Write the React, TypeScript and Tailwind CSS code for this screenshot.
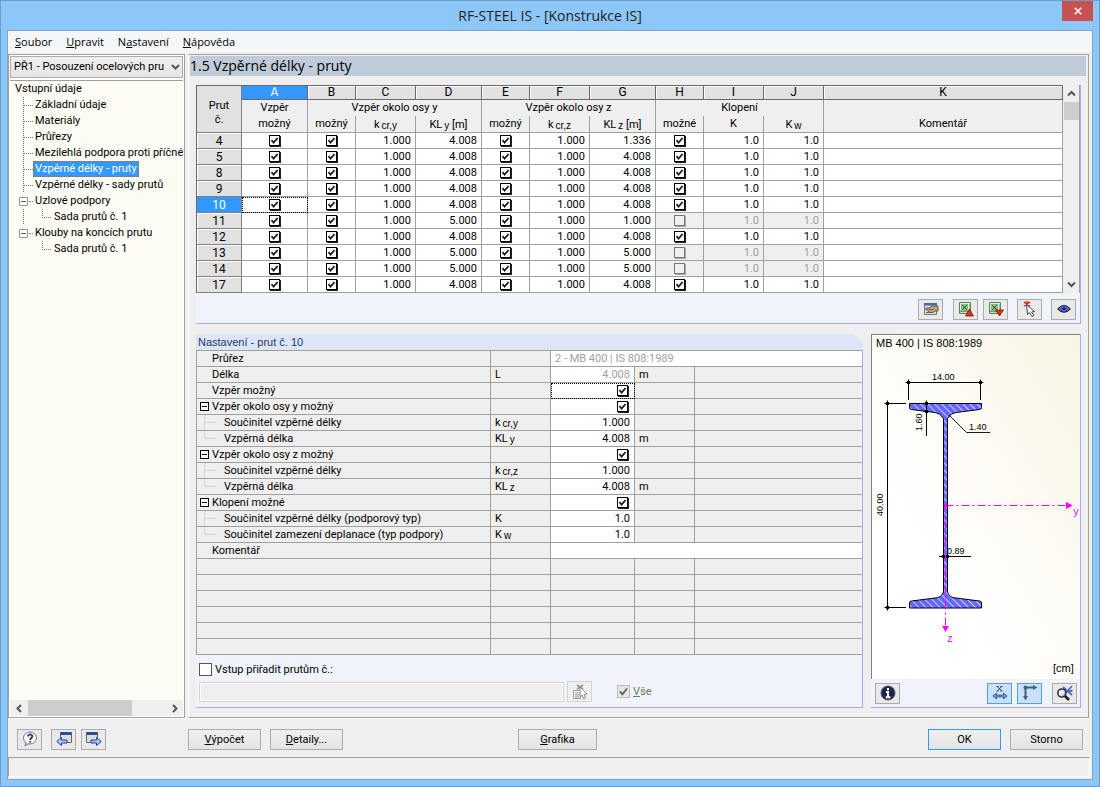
import { useState, type ReactNode } from "react";

const columns = [
  { letter: "A", width: 66 },
  { letter: "B", width: 48 },
  { letter: "C", width: 60 },
  { letter: "D", width: 66 },
  { letter: "E", width: 48 },
  { letter: "F", width: 60 },
  { letter: "G", width: 66 },
  { letter: "H", width: 48 },
  { letter: "I", width: 60 },
  { letter: "J", width: 60 },
  { letter: "K", width: 0 },
];

const members = [
  { no: 4, kly: "4.008", klz: "1.336", ltb: true },
  { no: 5, kly: "4.008", klz: "4.008", ltb: true },
  { no: 8, kly: "4.008", klz: "4.008", ltb: true },
  { no: 9, kly: "4.008", klz: "4.008", ltb: true },
  { no: 10, kly: "4.008", klz: "4.008", ltb: true },
  { no: 11, kly: "5.000", klz: "1.000", ltb: false },
  { no: 12, kly: "4.008", klz: "4.008", ltb: true },
  { no: 13, kly: "5.000", klz: "5.000", ltb: false },
  { no: 14, kly: "5.000", klz: "5.000", ltb: false },
  { no: 17, kly: "4.008", klz: "4.008", ltb: true },
];

type Setting = {
  label: string;
  kind?: "group" | "mid" | "last";
  symbol?: ReactNode;
  value?: string;
  check?: boolean;
  unit?: string;
  muted?: boolean;
  wide?: boolean;
};

const settings: Setting[] = [
  { label: "Průřez", value: "2 - MB 400 | IS 808:1989", muted: true, wide: true },
  { label: "Délka", symbol: "L", value: "4.008", unit: "m", muted: true },
  { label: "Vzpěr možný", check: true },
  { label: "Vzpěr okolo osy y možný", kind: "group", check: true },
  { label: "Součinitel vzpěrné délky", kind: "mid", symbol: <Sym base="k" sub="cr,y" />, value: "1.000" },
  { label: "Vzpěrná délka", kind: "last", symbol: <Sym base="KL" sub="y" />, value: "4.008", unit: "m" },
  { label: "Vzpěr okolo osy z možný", kind: "group", check: true },
  { label: "Součinitel vzpěrné délky", kind: "mid", symbol: <Sym base="k" sub="cr,z" />, value: "1.000" },
  { label: "Vzpěrná délka", kind: "last", symbol: <Sym base="KL" sub="z" />, value: "4.008", unit: "m" },
  { label: "Klopení možné", kind: "group", check: true },
  { label: "Součinitel vzpěrné délky (podporový typ)", kind: "mid", symbol: "K", value: "1.0" },
  { label: "Součinitel zamezení deplanace (typ podpory)", kind: "last", symbol: <Sym base="K" sub="w" />, value: "1.0" },
  { label: "Komentář", value: "", wide: true },
];

function Sym({ base, sub }: { base: string; sub: string }) {
  return (
    <span className="inline-flex items-end whitespace-nowrap">
      {base}
      <span className="pl-[2px] pt-[3px] font-['Liberation_Sans',sans-serif] text-[10px] leading-[12px]">{sub}</span>
    </span>
  );
}

function Tick({ label, checked = true, disabled = false }: { label: string; checked?: boolean; disabled?: boolean }) {
  return (
    <span className="relative inline-flex size-[11px] align-top">
      <input
        type="checkbox"
        aria-label={label}
        defaultChecked={checked}
        disabled={disabled}
        className="peer size-[11px] appearance-none border border-black bg-white shadow-[1px_1px_0_#222] disabled:border-[#777] disabled:bg-[#efefef] disabled:shadow-[1px_1px_0_#aaa]"
      />
      <svg viewBox="0 0 11 11" className="pointer-events-none absolute inset-0 hidden size-[11px] peer-checked:block">
        <path d="M2.5 5.2 4.6 7.6 8.6 3" fill="none" stroke="#222" strokeWidth="1.9" />
      </svg>
    </span>
  );
}

function TextButton({ children, primary, wide }: { children: ReactNode; primary?: boolean; wide?: boolean }) {
  return (
    <button
      type="button"
      className={`h-[21px] border bg-linear-to-b from-[#efefef] to-[#e4e4e4] text-[11px] leading-[19px] ${
        primary ? "border-[#3399ff]" : "border-[#acacac]"
      } ${wide ? "w-[79px]" : "w-[73px]"}`}
    >
      {children}
    </button>
  );
}

function IconButton({
  label,
  children,
  active,
  disabled,
}: {
  label: string;
  children: ReactNode;
  active?: boolean;
  disabled?: boolean;
}) {
  return (
    <button
      type="button"
      aria-label={label}
      title={label}
      disabled={disabled}
      className={`flex h-[21px] w-[25px] shrink-0 items-center justify-center border ${
        active ? "border-[#569de5] bg-[#c9e2fc]" : disabled ? "border-[#d4d4d4] bg-[#efefef]" : "border-[#acacac] bg-[#e9e9e9]"
      }`}
    >
      <svg viewBox="0 0 16 16" className="size-4">
        {children}
      </svg>
    </button>
  );
}

function Chevron({ d }: { d: string }) {
  return (
    <svg viewBox="0 0 9 9" className="size-[9px]">
      <path d={d} fill="none" stroke="#555" strokeWidth="2" />
    </svg>
  );
}

function ExcelIcon({ arrow }: { arrow: string }) {
  return (
    <>
      <path d="M1.5 1.5h11v11h-11z" fill="#e6eee4" stroke="#4f8a4c" />
      <path d="M2 10.500h10" stroke="#8a8f8a" strokeWidth="1.500" />
      <path d="M3 3h7v7H3z" fill="#6fae69" />
      <path d="m4 4 5 5M9 4 4 9" stroke="#fff" strokeWidth="2.400" />
      <path d="m4 4 5 5M9 4 4 9" stroke="#1f6b27" strokeWidth="1.200" />
      <path d="M11 4h1M11 6h1M11 8h1" stroke="#4f8a4c" />
      <path d={arrow} fill="#e0301e" stroke="#7d160d" strokeWidth=".8" />
    </>
  );
}

function WindowArrowIcon({ arrow, x }: { arrow: string; x: number }) {
  return (
    <>
      <path d={`M${x} 1.500h11v10h-11z`} fill="#dcdcdc" stroke="#666" />
      <path d={`M${x} 1h11v3h-11z`} fill="#2f4c94" />
      <path d={arrow} fill="#a9c8f8" stroke="#1f3fa0" />
    </>
  );
}

export default function App() {
  return (
    <div className="flex min-h-screen flex-col border border-[#6d9cc7] bg-[#8dc6f9] font-['Roboto','Liberation_Sans',sans-serif] text-[11px] leading-[15px] text-black">
      <header className="relative flex h-[29px] items-center justify-center">
        <h1 className="font-['Open_Sans','Noto_Sans',sans-serif] text-[14px] leading-5 text-[#222]">
          RF-STEEL IS - [Konstrukce IS]
        </h1>
        <button
          type="button"
          aria-label="Zavřít"
          className="absolute right-[6px] top-0 flex h-5 w-[31px] items-center justify-center bg-[#c75050]"
        >
          <svg viewBox="0 0 8 8" className="size-2">
            <path d="m.8.8 6.4 6.4M7.2.8.8 7.2" stroke="#fff" strokeWidth="1.6" />
          </svg>
        </button>
      </header>

      <div className="mx-[6px] mb-[6px] flex flex-1 flex-col border border-[#7da6ca] bg-[#efefef]">
        <nav className="flex h-[21px] items-center gap-[14px] bg-[#f5f6f7] pl-[7px] font-['Open_Sans','Noto_Sans',sans-serif] text-[11px]">
          <MenuItem before="" hot="S" after="oubor" />
          <MenuItem before="" hot="U" after="pravit" />
          <MenuItem before="N" hot="a" after="stavení" />
          <MenuItem before="" hot="N" after="ápověda" />
        </nav>

        <div className="flex flex-1 gap-[3px] border-b border-white pr-[3px] pt-[2px]">
          <Sidebar />
          <main className="flex min-w-0 flex-1 flex-col border border-[#a0a0a0] border-l-white bg-[#efefef] pb-[9px] pl-[1px] pt-[1px]">
            <h2 className="mr-[2px] h-5 bg-[#bfcbd9] font-['Open_Sans','Noto_Sans',sans-serif] text-[14px] leading-5">
              1.5 Vzpěrné délky - pruty
            </h2>
            <div className="ml-[6px] mr-[7px] mt-[9px] flex flex-1 flex-col gap-[10px]">
              <MembersPanel />
              <div className="flex flex-1 gap-2">
                <SettingsPanel />
                <SectionPanel />
              </div>
            </div>
          </main>
        </div>

        <footer className="flex h-[38px] items-center pl-[9px] pr-[9px] pt-[2px]">
          <div className="flex w-[171px] gap-[5px]">
            <IconButton label="Nápověda">
              <ellipse cx="8" cy="7" rx="6.5" ry="6" fill="#fff" stroke="#777" />
              <path d="m4 11-1 4 4-2.5" fill="#ddd" stroke="#777" />
              <path d="M6 5.500C6 2.600 10.500 3 10.300 5.500 10.100 7 8.200 7 8.200 9M8.200 10v1.600" fill="none" stroke="#23408f" strokeWidth="1.9" />
            </IconButton>
            <div className="ml-1 flex gap-[5px]">
              <IconButton label="Předchozí">
                <WindowArrowIcon x={4.5} arrow="M.8 10.500 5.500 6.500v2.500h5.500v3H5.500v2.500z" />
              </IconButton>
              <IconButton label="Další">
                <WindowArrowIcon x={0.5} arrow="M15.200 10.500 10.500 6.500V9H5v3h5.500v2.500z" />
              </IconButton>
            </div>
          </div>
          <div className="flex flex-1 gap-[9px]">
            <TextButton>
              <u>V</u>ýpočet
            </TextButton>
            <TextButton>
              <u>D</u>etaily...
            </TextButton>
            <div className="ml-[166px]">
              <TextButton wide>
                <u>G</u>rafika
              </TextButton>
            </div>
            <div className="ml-auto flex gap-[9px]">
              <TextButton primary>OK</TextButton>
              <TextButton>Storno</TextButton>
            </div>
          </div>
        </footer>
        <div role="status" className="mb-[2px] mr-[2px] h-[20px] border border-[#a0a0a0] border-b-white border-r-white" />
      </div>
    </div>
  );
}

function MenuItem({ before, hot, after }: { before: string; hot: string; after: string }) {
  return (
    <button type="button">
      {before}
      <u>{hot}</u>
      {after}
    </button>
  );
}

function Sidebar() {
  return (
    <aside className="flex w-[177px] shrink-0 flex-col border border-[#a0a0a0] bg-white p-px">
      <div className="relative">
        <select
          aria-label="Případ"
          className="h-[22px] w-full appearance-none border border-[#acacac] bg-linear-to-b from-[#efefef] to-[#e5e5e5] pl-[3px] pr-[18px] text-[11px] leading-5"
        >
          <option>PŘ1 - Posouzení ocelových pru</option>
        </select>
        <span className="pointer-events-none absolute right-[3px] top-[7px]">
          <Chevron d="M1 2 4.500 5.500 8 2" />
        </span>
      </div>
      <ul className="mt-[2px] flex-1 overflow-hidden border-t border-[#a0a0a0] bg-[#fcfcf4] leading-4">
        <li className="pl-[5px]">Vstupní údaje</li>
        <TreeItem label="Základní údaje" />
        <TreeItem label="Materiály" />
        <TreeItem label="Průřezy" />
        <TreeItem label="Mezilehlá podpora proti příčném" />
        <TreeItem label="Vzpěrné délky - pruty" selected />
        <TreeItem label="Vzpěrné délky - sady prutů" />
        <TreeItem label="Uzlové podpory" expandable />
        <TreeItem label="Sada prutů č. 1" nested trunk />
        <TreeItem label="Klouby na koncích prutu" expandable />
        <TreeItem label="Sada prutů č. 1" nested />
      </ul>
      <div className="flex h-4 items-center bg-[#efefef]">
        <span className="flex w-[18px] justify-center">
          <Chevron d="M6 1 2.500 4.500 6 8" />
        </span>
        <span className="h-full w-[104px] bg-[#cdcdcd]" />
        <span className="ml-auto flex w-[17px] justify-center">
          <Chevron d="M3 1 6.500 4.500 3 8" />
        </span>
      </div>
    </aside>
  );
}

function TreeItem({
  label,
  selected,
  expandable,
  nested,
  trunk,
}: {
  label: string;
  selected?: boolean;
  expandable?: boolean;
  nested?: boolean;
  trunk?: boolean;
}) {
  return (
    <li className="flex h-4 items-center whitespace-nowrap pl-[9px]">
      <span className={`flex h-4 shrink-0 items-center ${nested ? "w-[33px]" : "w-[14px]"}`}>
        {expandable ? (
          <>
            <button
              type="button"
              aria-label={`Sbalit ${label}`}
              className="flex size-[9px] shrink-0 items-center justify-center rounded-[1px] border border-[#919191] bg-white"
            >
              <span className="h-px w-[5px] bg-[#3b5fa8]" />
            </button>
            <span className="ml-px h-px w-1 border-t border-dotted border-[#888]" />
          </>
        ) : (
          <svg viewBox="0 0 35 16" className="h-4 w-[35px] shrink-0">
            {(!nested || trunk) && <path d="M4.500 0v16" stroke="#777" strokeDasharray="1 1" />}
            <path d={nested ? "M23.500 0v8.500h9" : "M5 8.500h9"} fill="none" stroke="#777" strokeDasharray="1 1" />
          </svg>
        )}
      </span>
      <span
        className={
          selected
            ? "relative h-4 border border-dotted border-[#c06a10] bg-[#3399ff] px-px leading-[14px] text-white"
            : "relative px-[2px]"
        }
      >
        {label}
      </span>
    </li>
  );
}

const headCell = "border-r border-[#a0a0a0] p-0 text-center font-normal leading-[14px]";
const cell = "h-4 border-b border-r border-[#a0a0a0] p-0";

function MembersPanel() {
  const [current, setCurrent] = useState(10);
  return (
    <section className="border-b border-r border-[#a9a9ee] bg-[#f0f3fa]">
      <div className="flex bg-[#efefef]">
        <table className="min-w-0 flex-1 table-fixed border-separate border-spacing-0 border-l border-t border-[#696969]">
          <colgroup>
            <col className="w-[45px]" />
            {columns.map((c) => (
              <col key={c.letter} style={c.width ? { width: c.width } : undefined} />
            ))}
          </colgroup>
          <thead>
            <tr className="h-[14px]">
              <th rowSpan={3} className="border-b border-r border-[#808080] bg-[#e1e1e1] p-0 pt-[8px] font-normal leading-[14px]">
                Prut
                <br />
                č.
              </th>
              {columns.map((c) => (
                <th
                  key={c.letter}
                  className={`h-[14px] border-b border-r border-[#696969] p-0 text-center text-[12px] font-normal leading-[13px] ${
                    c.letter === "A" ? "bg-[#3399ff] text-white" : "bg-[#e1e1e1] shadow-[inset_1px_1px_0_#fff]"
                  }`}
                >
                  {c.letter}
                </th>
              ))}
            </tr>
            <tr className="h-4">
              <th className={headCell}>Vzpěr</th>
              <th colSpan={3} className={headCell}>Vzpěr okolo osy y</th>
              <th colSpan={3} className={headCell}>Vzpěr okolo osy z</th>
              <th colSpan={3} className={headCell}>Klopení</th>
              <th className={headCell} />
            </tr>
            <tr className="h-[17px]">
              <th className={`${headCell} border-b`}>možný</th>
              <th className={`${headCell} border-b`}>možný</th>
              <th className={`${headCell} border-b`}><Sym base="k" sub="cr,y" /></th>
              <th className={`${headCell} border-b`}><Sym base="KL" sub="y" /> [m]</th>
              <th className={`${headCell} border-b`}>možný</th>
              <th className={`${headCell} border-b`}><Sym base="k" sub="cr,z" /></th>
              <th className={`${headCell} border-b`}><Sym base="KL" sub="z" /> [m]</th>
              <th className={`${headCell} border-b`}>možné</th>
              <th className={`${headCell} border-b`}>K</th>
              <th className={`${headCell} border-b`}><Sym base="K" sub="w" /></th>
              <th className={`${headCell} border-b`}>Komentář</th>
            </tr>
          </thead>
          <tbody className="bg-white text-right">
            {members.map((m) => {
              const off = m.ltb ? "" : "bg-[#efefef] text-[#a0a0a0]";
              return (
                <tr key={m.no} onClick={() => setCurrent(m.no)}>
                  <th
                    className={`h-4 border-b border-r border-[#808080] p-0 text-center text-[12px] font-normal leading-[14px] ${
                      m.no === current ? "bg-[#3399ff] text-white" : "bg-[#e1e1e1] shadow-[inset_1px_1px_0_#fff]"
                    }`}
                  >
                    {m.no}
                  </th>
                  <td className={`${cell} text-center leading-[11px] ${m.no === current ? "outline-1 -outline-offset-1 outline-dotted outline-black" : ""}`}>
                    <Tick label={`Vzpěr možný, prut ${m.no}`} />
                  </td>
                  <td className={`${cell} text-center leading-[11px]`}><Tick label={`Vzpěr okolo osy y, prut ${m.no}`} /></td>
                  <td className={`${cell} pr-1`}>1.000</td>
                  <td className={`${cell} pr-1`}>{m.kly}</td>
                  <td className={`${cell} text-center leading-[11px]`}><Tick label={`Vzpěr okolo osy z, prut ${m.no}`} /></td>
                  <td className={`${cell} pr-1`}>1.000</td>
                  <td className={`${cell} pr-1`}>{m.klz}</td>
                  <td className={`${cell} text-center leading-[11px] ${off}`}>
                    <Tick label={`Klopení, prut ${m.no}`} checked={m.ltb} disabled={!m.ltb} />
                  </td>
                  <td className={`${cell} pr-1 ${off}`}>1.0</td>
                  <td className={`${cell} pr-1 ${off}`}>1.0</td>
                  <td className={cell} />
                </tr>
              );
            })}
          </tbody>
        </table>
        <div className="ml-px flex w-4 shrink-0 flex-col items-center border-r border-[#a0a0a0]">
          <span className="flex h-[17px] items-center">
            <Chevron d="M1 6.500 4.500 3 8 6.500" />
          </span>
          <span className="h-[18px] w-full bg-[#cdcdcd]" />
          <span className="mt-auto flex h-[17px] items-center">
            <Chevron d="M1 2.500 4.500 6 8 2.500" />
          </span>
        </div>
      </div>
      <div className="flex h-[30px] items-center justify-end gap-[9px] pr-[4px] pt-[2px]">
        <IconButton label="Upravit">
          <path d="M1.500 2.500h12v11h-12z" fill="#d8dce2" stroke="#777" />
          <path d="M1 2h13v2.500H1z" fill="#3f6cae" />
          <path d="M3 7h3l3-2h6v5h-3l-2 1.500H6L5 9H3z" fill="#c2a47a" stroke="#554430" strokeWidth=".8" />
          <path d="M3 11.500h3M6 8.500h5" stroke="#666" />
        </IconButton>
        <div className="ml-px flex gap-[5px]">
          <IconButton label="Export do Excelu">
            <ExcelIcon arrow="M11.500 8 15.500 15H7.500z" />
          </IconButton>
          <IconButton label="Import z Excelu">
            <ExcelIcon arrow="M7.500 9h8l-4 6z" />
          </IconButton>
        </div>
        <IconButton label="Vybrat prut">
          <path d="m2 1 6 4M8 1 2 5M5 0v5" stroke="#d33a2c" strokeWidth="1.600" />
          <path d="m4.500 3.500 8 7-3 .5 2.500 3.500-2 1-2.500-4-2 2z" fill="#fff" stroke="#444" />
        </IconButton>
        <IconButton label="Zobrazit">
          <path d="M2 8q6-7 12 0-6 6.500-12 0z" fill="#dfe3ff" stroke="#222" strokeWidth="1.200" />
          <circle cx="8" cy="7.800" r="3.300" fill="#5a6bf0" stroke="#1e2a80" />
          <circle cx="8" cy="7.800" r="1.300" fill="#000" />
        </IconButton>
      </div>
    </section>
  );
}

function SettingsPanel() {
  return (
    <section className="flex min-w-0 flex-1 flex-col border-b border-r border-[#a9a9ee] bg-[#f0f3fa]">
      <div className="-mr-px bg-[#efefef]">
        <h3 className="h-4 bg-[#dce6f7] pl-[2px] font-['Liberation_Sans',sans-serif] leading-4 text-[#1f3a63] [clip-path:polygon(0_0,calc(100%_-_10px)_0,100%_10px,100%_100%,0_100%)]">
          Nastavení - prut č. 10
        </h3>
      </div>
      <table className="w-full table-fixed border-separate border-spacing-0 border-l border-t border-[#a0a0a0] bg-[#efefef]">
        <colgroup>
          <col />
          <col className="w-[60px]" />
          <col className="w-[84px]" />
          <col className="w-[60px]" />
          <col className="w-[167px]" />
        </colgroup>
        <tbody>
          {settings.map((s, i) => (
            <tr key={i}>
              <th className={`${cell} text-left font-normal`}>
                <span className="flex h-[15px] items-center">
                  {s.kind === "group" ? (
                    <span className="flex w-[15px] shrink-0 pl-[3px]">
                      <button
                        type="button"
                        aria-label={`Sbalit ${s.label}`}
                        className="flex size-[9px] items-center justify-center border border-black bg-white"
                      >
                        <span className="h-px w-[5px] bg-black" />
                      </button>
                    </span>
                  ) : s.kind ? (
                    <svg viewBox="0 0 27 15" className="h-[15px] w-[27px] shrink-0">
                      <path d={s.kind === "mid" ? "M7.500 0v15M7.500 7.500h12" : "M7.500 0v7.500h12"} fill="none" stroke="#d4d4d4" />
                    </svg>
                  ) : (
                    <span className="w-[15px] shrink-0" />
                  )}
                  {s.label}
                </span>
              </th>
              <td className={`${cell} pl-1`}>{s.symbol}</td>
              {s.wide ? (
                <td colSpan={3} className={`${cell} border-r-0 bg-white pl-1 text-[#a0a0a0]`}>{s.value}</td>
              ) : (
                <>
                  <td
                    className={`${cell} bg-white text-right ${s.muted ? "text-[#a0a0a0]" : ""} ${
                      s.check ? "pr-[6px] leading-[11px]" : "pr-1"
                    } ${i === 2 ? "outline-1 -outline-offset-1 outline-dotted outline-black" : ""}`}
                  >
                    {s.check ? <Tick label={s.label} /> : s.value}
                  </td>
                  <td className={`${cell} pl-1`}>{s.unit}</td>
                  <td className={`${cell} border-r-0`} />
                </>
              )}
            </tr>
          ))}
          {[0, 1, 2, 3, 4, 5].map((i) => (
            <tr key={i}>
              <td className={cell} />
              <td className={cell} />
              <td className={cell} />
              <td className={cell} />
              <td className={`${cell} border-r-0`} />
            </tr>
          ))}
        </tbody>
      </table>
      <div className="flex flex-1 flex-col px-[3px] pt-[7px]">
        <label className="flex items-center gap-[3px]">
          <input type="checkbox" className="size-[13px] appearance-none border border-[#555] bg-white" />
          Vstup přiřadit prutům č.:
        </label>
        <div className="mt-[4px] flex items-center">
          <input
            type="text"
            disabled
            aria-label="Čísla prutů"
            className="h-[20px] w-[365px] border border-[#d4d4d4] bg-[#efefef] shadow-[inset_0_0_0_1px_#fff]"
          />
          <div className="ml-[3px]">
            <IconButton label="Vybrat pruty" disabled>
              <path d="M1.500 6.500h7v8h-7z" fill="#f4f4f4" stroke="#999" />
              <path d="M3 9h4M3 11h4M3 13h4" stroke="#999" />
              <path d="m5 1 6 4M11 1 5 5" stroke="#999" strokeWidth="1.800" />
              <path d="m8 3 7 7-3 .5 1.500 3.500-1.500 1-2-4-2 2z" fill="#fff" stroke="#888" />
            </IconButton>
          </div>
          <label className="ml-[25px] flex items-center gap-[3px] text-[#6b7a68]">
            <span className="relative inline-flex size-[13px]">
              <input type="checkbox" defaultChecked disabled className="size-[13px] appearance-none border border-[#bcbcbc] bg-[#e6e6e6]" />
              <svg viewBox="0 0 13 13" className="pointer-events-none absolute inset-0 size-[13px]">
                <path d="m3 6.500 2.500 2.800L10 3.500" fill="none" stroke="#666" strokeWidth="2" />
              </svg>
            </span>
            <span>
              <u>V</u>še
            </span>
          </label>
        </div>
      </div>
    </section>
  );
}

function Node({ x, y }: { x: number; y: number }) {
  return <path d={`M${x - 3} ${y}h6M${x} ${y - 3}v6M${x - 2} ${y}l2-2 2 2-2 2z`} fill="#000" stroke="#000" />;
}

function SectionPanel() {
  return (
    <section className="flex w-[210px] shrink-0 flex-col border-b border-r border-[#a9a9ee] bg-[#f0f3fa]">
      <div className="border-l border-t border-[#808080] bg-linear-to-tr from-white from-30% to-[#f9f5e4]">
        <svg
          viewBox="0 0 208 344"
          className="block h-[344px] w-[208px] font-['Liberation_Sans',sans-serif] text-[9px]"
          role="img"
          aria-label="Průřez MB 400"
        >
          <defs>
            <pattern id="hatch" width="5" height="5" patternUnits="userSpaceOnUse" patternTransform="rotate(-45)">
              <rect width="5" height="5" fill="#6666ff" />
              <path d="M0 0v5" stroke="#c4ccf4" strokeWidth="2" />
            </pattern>
          </defs>
          <text x="4" y="12" className="text-[11px]">MB 400 | IS 808:1989</text>
          <path
            d="M37.500 68.500h72v4q0 2-2 2L84 77.500q-5 0-8.500 6V257q2 6 8.500 6l23.500 3q2 0 2 2v5h-72v-5q0-2 2-2L63 263q6 0 8.500-6V83.500q-3.500-6-8.500-6l-23.500-3q-2 0-2-2z"
            fill="url(#hatch)"
            stroke="#000"
          />
          <g fill="none" stroke="#000">
            <path d="M36.500 47.500h73M36.500 47v18M108.500 47v18" />
            <path d="M15.500 68v205M15 68.500h19M15 272.500h19" />
            <path d="M54.500 68v33" />
            <path d="m77 80 17.500 17.500H118" strokeWidth=".9" />
            <path d="M67 221.500h32" />
          </g>
          <Node x={36.5} y={47.5} />
          <Node x={108.5} y={47.5} />
          <Node x={15.5} y={68.5} />
          <Node x={15.5} y={272.5} />
          <Node x={54.5} y={68.5} />
          <Node x={54.5} y={76.5} />
          <Node x={71.5} y={221.5} />
          <Node x={75.5} y={221.5} />
          <text x="60" y="45">14.00</text>
          <text x="97" y="95">1.40</text>
          <text x="75" y="219">0.89</text>
          <text transform="translate(50 96) rotate(-90)">1.60</text>
          <text transform="translate(11 181) rotate(-90)">40.00</text>
          <g stroke="#f0f" fill="none" strokeDasharray="8 3 2 3">
            <path d="M73.500 170.500H194" />
            <path d="M73.500 170.500V291" />
          </g>
          <path d="M194 167v7l7-3.500zM70 291h7l-3.500 6z" fill="#f0f" />
          <circle cx="73.500" cy="170.500" r="2" fill="#f0f" />
          <g fill="#f0f" className="font-['Liberation_Mono',monospace] text-[10px]">
            <text x="201" y="180">y</text>
            <text x="75" y="307">z</text>
          </g>
          <text x="181" y="337" className="text-[11px]">[cm]</text>
        </svg>
      </div>
      <div className="flex flex-1 items-center pl-[4px] pr-[3px]">
        <IconButton label="Informace">
          <circle cx="8" cy="8" r="7" fill="#1b2550" stroke="#555" />
          <path d="M8 3v2.200M6 7h2v5M5.800 12.200h4.600" fill="none" stroke="#fff" strokeWidth="2" />
        </IconButton>
        <div className="ml-auto flex gap-[5px]">
          <IconButton label="Kóty" active>
            <path d="m5.500 1.500 4 4.500M9.500 1.500l-4 4.500M4.500 1.500h2M8.500 1.500h2M4.500 6h2M8.500 6h2" stroke="#333" strokeWidth=".9" />
            <path d="M.8 11 4.500 8v2h7V8l3.700 3-3.700 3v-2h-7v2z" fill="#5f93cc" stroke="#34618f" strokeWidth=".8" />
          </IconButton>
          <IconButton label="Osy" active>
            <path d="M3.500 13V2.500H12" fill="none" stroke="#44617f" strokeWidth="2" />
            <path d="M11 0v5l4.500-2.500zM1 11h5l-2.500 4.500z" fill="#44617f" />
            <circle cx="3.500" cy="2.500" r="2" fill="#44617f" />
          </IconButton>
        </div>
        <div className="ml-[10px]">
          <IconButton label="Zobrazit celé">
            <path d="m6 2 9 8M15 1 6 11M8 6h7.500" stroke="#4a6fc4" strokeWidth="1.800" />
            <circle cx="4.800" cy="8" r="4" fill="#e9e9e9" fillOpacity=".6" stroke="#333" strokeWidth="1.600" />
            <path d="m8 11 4 4" stroke="#222" strokeWidth="2.600" />
          </IconButton>
        </div>
      </div>
    </section>
  );
}
